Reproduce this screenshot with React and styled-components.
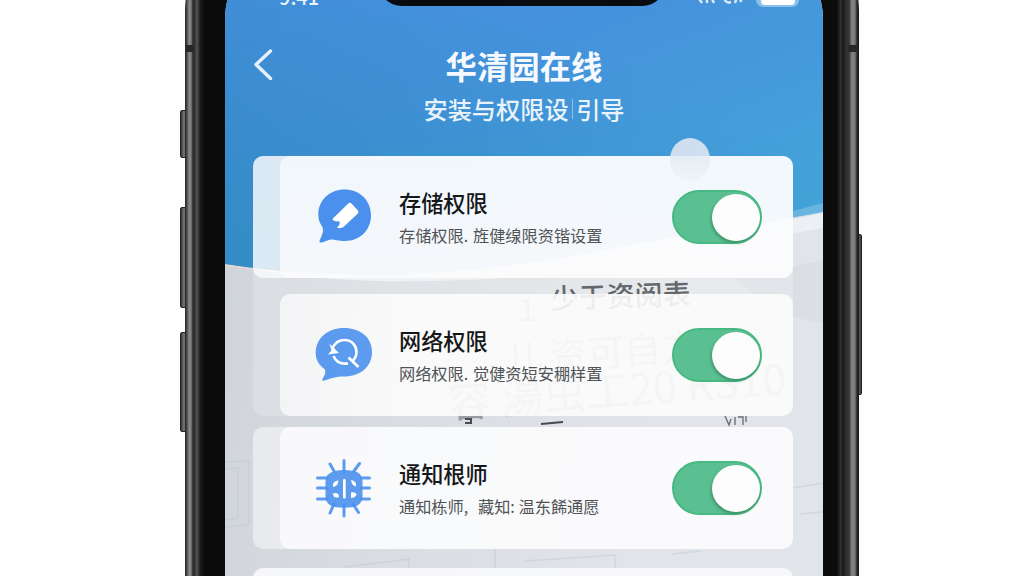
//import styled
import styled, { createGlobalStyle } from "styled-components";

//global styles
const GlobalStyle = createGlobalStyle`
  * {
    box-sizing: border-box;
  }
  body {
    margin: 0;
    background: #fefefe;
    overflow: hidden;
    font-family: "Noto Sans CJK SC", "Noto Sans", sans-serif;
  }
`;

//styles
const Page = styled.main`
  display: flex;
  width: 1024px;
  height: 576px;
  padding-left: 185px;
  overflow: hidden;
`;

const Phone = styled.div`
  position: relative;
  flex: none;
  width: 674px;
  height: 760px;
  margin-top: -83px;
  padding: 28px 36px 0 40px;
  border-radius: 94px;
  background: linear-gradient(
    90deg,
    #252525 0,
    #4b4a4a 2px,
    #8b8887 4px,
    #817e7d 6px,
    #292929 8px,
    #353535 10px,
    #555 12px,
    #1c1c1c 15px,
    #0b0b0b 20px,
    #080808 50%,
    #0b0b0b 652px,
    #343434 656px,
    #171717 658px,
    #303030 661px,
    #353535 664px,
    #888685 667px,
    #777 670px,
    #292929 672px,
    #161616 674px
  );
`;

const SideKey = styled.span`
  position: absolute;
  z-index: -1;
  ${({ side }) => side}: ${({ side }) => (side === "left" ? "-5px" : "-3px")};
  top: ${({ top }) => top + 83}px;
  width: 8px;
  height: ${({ size }) => size}px;
  border: 1px solid #222;
  border-radius: 2px;
  background: linear-gradient(90deg, #343434, #777, #3a3a3a);
`;

const Antenna = styled.span`
  position: absolute;
  ${({ side }) => side}: 1px;
  top: 128px;
  width: ${({ side }) => (side === "left" ? "8px" : "10px")};
  height: 7px;
  background: #292827;
`;

const Screen = styled.div`
  position: relative;
  height: 740px;
  border-radius: 74px 74px 0 0;
  overflow: hidden;
  background: linear-gradient(
    100deg,
    #cdd2d8 0%,
    #d9dde1 35%,
    #e1e4e8 70%,
    #e1e5ea 100%
  );
`;

const Backdrop = styled.svg`
  position: absolute;
  left: 0;
  top: 55px;
  width: 598px;
  height: 576px;
`;

const StatusBar = styled.div`
  position: relative;
  display: flex;
  justify-content: space-between;
  align-items: flex-end;
  height: 64px;
  padding: 0 22px 0 54px;
  color: #e9f3ff;
`;

const Time = styled.span`
  width: 90px;
  font-size: 20px;
  line-height: 20px;
  font-weight: 500;
  padding-bottom: 2px;
`;

const Notch = styled.span`
  width: 288px;
  height: 64px;
  margin: 0 20px 3px 0;
  border-radius: 0 0 24px 24px;
  background: #080b10;
`;

const StatusIcons = styled.svg`
  width: 106px;
  height: 22px;
`;

const Header = styled.header`
  position: relative;
  display: grid;
  grid-template-columns: 28px 1fr 28px;
  height: 147px;
  padding: 34px 25px 0 25px;
  color: #f6f9ff;
`;

const BackButton = styled.button`
  display: flex;
  align-items: flex-start;
  padding: 1px 0 0;
  border: none;
  background: transparent;
  color: #e6f0ff;
`;

const Headings = styled.div`
  display: flex;
  flex-direction: column;
  align-items: center;
`;

const Title = styled.h1`
  margin: 0;
  font-size: 31.4px;
  line-height: 46px;
  font-weight: 600;
`;

const Subtitle = styled.p`
  display: flex;
  align-items: center;
  margin: 0;
  font-size: 24.2px;
  line-height: 39px;
  font-weight: 500;
  color: #e9f3fd;
`;

const Divider = styled.span`
  width: 1.5px;
  height: 20px;
  margin: 0 3px;
  background: rgba(255, 255, 255, 0.4);
`;

const CardArea = styled.section`
  position: relative;
  padding: 0 30px 0 28px;
`;

const CardGroup = styled.div`
  display: flex;
  flex-direction: column;
  gap: 16px;
  margin-bottom: 11px;
  border-radius: 10px;
  background: rgba(255, 255, 255, 0.2);
`;

const Card = styled.article`
  height: 122px;
  margin-bottom: ${({ gap }) => gap || 0}px;
  padding-left: 27px;
  border-radius: 10px;
  overflow: hidden;
  background: ${({ base }) => base};
`;

const CardBody = styled.div`
  display: flex;
  align-items: center;
  height: 100%;
  padding: 0 31px 0 35px;
  border-radius: 10px;
  background: ${({ tone }) => tone};
`;

const IconSlot = styled.svg`
  flex: none;
  width: 60px;
  height: 60px;
  color: #4a90ec;
`;

const Copy = styled.div`
  flex: 1;
  padding: 3px 0 0 24px;
`;

const RowTitle = styled.h2`
  margin: 0;
  color: #151719;
  font-size: 22.2px;
  line-height: 33px;
  font-weight: 500;
`;

const RowText = styled.p`
  display: flex;
  margin: 0;
  color: #505356;
  font-size: 16.2px;
  line-height: 32px;
  white-space: nowrap;
`;

const Lead = styled.span`
  width: ${({ width }) => width}px;
`;

const Switch = styled.button`
  flex: none;
  display: flex;
  justify-content: flex-end;
  align-items: center;
  width: 90px;
  height: 54px;
  padding: 0;
  border: 2px solid #48b883;
  border-radius: 27px;
  background: #5bc091;
`;

const Knob = styled.span`
  width: 48px;
  height: 47px;
  border-radius: 50%;
  background: #fdfdfd;
  box-shadow: -1px 2px 3px rgba(24, 92, 58, 0.45);
`;

const Bubble = styled.span`
  position: absolute;
  left: 445px;
  top: 193px;
  width: 40px;
  height: 43px;
  border-radius: 50%;
  background: linear-gradient(
    rgba(229, 234, 243, 0.86) 0 18px,
    rgba(226, 234, 242, 0.8) 18px,
    rgba(238, 243, 247, 0.8)
  );
`;

//icons
const StorageIcon = () => (
  <IconSlot viewBox="0 0 60 60">
    <path
      fill="currentColor"
      d="M29.5 2.5C44 2.5 56 12.5 56 28.500C56 43 45 54 30 54C24 54 19 52.500 16.500 52.500C12.500 52.500 9 56 5 55.500C4 55 4.500 53.500 5.500 51.500C7.500 47 9.500 43 6.500 38.500C4 35 3.300 31 3.300 27.500C3.300 13 15 2.500 29.500 2.500Z"
    />
    <path
      fill="#fff"
      d="M33.500 16.300Q35 15 36.500 16.500L43 23.500Q44 25 42.800 26.500L28.500 40Q25 42 22 40.500Q25.500 37.500 24.500 34.500Q20.500 34.500 17.500 33Q18 30.500 20.500 29Z"
    />
  </IconSlot>
);

const NetworkIcon = () => (
  <IconSlot viewBox="0 0 60 60">
    <path
      fill="currentColor"
      fillOpacity=".9"
      d="M29 3C45 3 57 12 57 27C57 42 45 51.500 29 51.500C20 51.500 18 53 7.500 56Q7 55 8.500 52Q11 48 10 44.500C4 40 .7 35 .7 28C.7 13 13 3 29 3Z"
    />
    <g fill="none" stroke="#fff" strokeWidth="2.600">
      <path d="M17.500 23.500C20 17 25 15 29.500 15C37 15 41.500 21 41.500 27C41.500 31 39.500 34.500 36.500 36.500M18.500 31C21 37 25 39.500 33 38.500" />
      <path d="M33.500 32.500L43.500 42" />
    </g>
    <path fill="#fff" d="M14.500 18.500L24 28L13 29.500L16.500 25.500Z" />
  </IconSlot>
);

const NoticeIcon = () => (
  <IconSlot viewBox="0 0 60 60">
    <path
      stroke="currentColor"
      strokeOpacity=".9"
      strokeWidth="3"
      strokeLinecap="round"
      d="M29 2.500V14M29 47V58M15 6L19 13M44.500 5.500L39 13M19 46L15 55M38 46L43.500 54.500M2.500 20H12M2.500 30H12M2.500 41H12M46 20H54.500M46 30H54.500M46 41H54.500"
    />
    <path
      fill="currentColor"
      fillOpacity=".9"
      d="M20 13Q29 11 38 13Q47 14 47.500 23V39Q47 47 38 49Q29 50.500 20 49Q11 47 10.500 39V23Q11 15 20 13Z"
    />
    <g fill="#fff">
      <rect x="28" y="21" width="2.700" height="19.500" rx="1" />
      <path d="M18 29Q17 23 23.500 22.500Q23 28 18 29ZM36 22Q42 23 41 28.500Q36.500 27.500 36 22ZM17.500 35L21.500 36L19.500 40ZM20 35Q24 35 24 39Q20 41 20 37ZM36 34.500Q41 33.500 41.500 37Q39.500 40.500 36 40Z" />
    </g>
  </IconSlot>
);

//wave and faded lettering that lie under the cards
const Scenery = () => (
  <Backdrop viewBox="225 0 598 576">
    <defs>
      <linearGradient id="sky" x1="0" y1="0" x2=".7" y2="1">
        <stop offset="0" stopColor="#488fe1" />
        <stop offset=".45" stopColor="#4592dc" />
        <stop offset="1" stopColor="#45a5d9" />
      </linearGradient>
      <linearGradient id="shade" x1=".6" y1=".3" x2="0" y2="1">
        <stop offset="0" stopColor="#2a86bb" stopOpacity="0" />
        <stop offset="1" stopColor="#2a86bb" stopOpacity=".7" />
      </linearGradient>
    </defs>
    <path fill="#eceff3" d="M253 268Q420 290 610 248T823 211V228L610 268Q390 294 253 269Z" />
    <path fill="url(#sky)" d="M225 -60H823V212Q760 224 640 243Q410 293 225 264Z" />
    <path fill="url(#shade)" d="M225 -60H823V212Q760 224 640 243Q410 293 225 264Z" />
    <path fill="#a4d2ed" fillOpacity=".4" d="M793 211L823 203V213L793 219Z" />
    <path fill="none" stroke="#efd9ce" strokeWidth="1.200" d="M225 265L253 269" />
    <path fill="#d2d8dd" fillOpacity=".4" d="M735 278Q777 320 823 322V260Q780 270 735 278Z" />
    <g fill="none" stroke="#b9c2cc" strokeOpacity=".4" strokeWidth="1.500">
      <path d="M225 462L249 461V524L225 527M225 469L238 468V518L225 520" />
      <path d="M345 567L409 559V576M495 546V568M525 561L615 555V568M672 554L700 551M793 488L823 483M800 514L823 512" />
    </g>
    <g fill="#3d4348">
      <text x="519" y="321" fontSize="30" fillOpacity=".5">1</text>
      <text x="551" y="309" fontSize="28" fontWeight="500" transform="rotate(-2 551 309)">
        少于资阅表
      </text>
    </g>
    <g fill="#85898d" fillOpacity=".75">
      <text x="506" y="373" fontSize="37" transform="rotate(-4 506 373)">
        儿 资可自方
      </text>
      <text x="449" y="418" fontSize="43" transform="rotate(-4 449 418)">
        容 湯虫工20 RS10
      </text>
    </g>
    <path d="M465 419H471V423H465M541 424L563 422" fill="none" stroke="#484c50" strokeWidth="2" />
    <path d="M725 416L729 425L731 419M735 417V425M738 417H743V425M746 416V422" fill="none" stroke="#65696d" strokeWidth="1.300" />
  </Backdrop>
);

const cards = [
  {
    icon: <StorageIcon />,
    title: "存储权限",
    lead: "存储权限.",
    text: "旌健缐限资锴设置",
    leadWidth: 74,
    base: "rgba(250, 250, 251, 0.8)",
    tone: "linear-gradient(rgba(250, 252, 255, 0.72), rgba(252, 252, 253, 0.78))",
  },
  {
    icon: <NetworkIcon />,
    title: "网络权限",
    lead: "网络权限.",
    text: "觉健资短安稝样置",
    leadWidth: 74,
    base: "transparent",
    tone: "linear-gradient(90deg, rgba(250, 250, 251, 0.78), rgba(252, 252, 252, 0.9) 25%)",
  },
];

const notice = {
  icon: <NoticeIcon />,
  title: "通知根师",
  lead: "通知栋师,",
  text: "藏知: 温东餙通愿",
  leadWidth: 79,
  base: "rgba(250, 250, 252, 0.55)",
  tone: "rgba(253, 253, 254, 0.8)",
};

const PermissionCard = ({ item, gap }) => (
  <Card base={item.base} gap={gap}>
    <CardBody tone={item.tone}>
      {item.icon}
      <Copy>
        <RowTitle>{item.title}</RowTitle>
        <RowText>
          <Lead width={item.leadWidth}>{item.lead}</Lead>
          {item.text}
        </RowText>
      </Copy>
      <Switch role="switch" aria-checked="true">
        <Knob />
      </Switch>
    </CardBody>
  </Card>
);

//component
export default function App() {
  return (
    <>
      <GlobalStyle />
      <Page>
        <Phone>
          <SideKey side="left" top={110} size={48} />
          <SideKey side="left" top={207} size={101} />
          <SideKey side="left" top={332} size={100} />
          <SideKey side="right" top={234} size={161} />
          <Antenna side="left" />
          <Antenna side="right" />
          <Screen>
            <Scenery />
            <StatusBar>
              <Time>9:41</Time>
              <Notch />
              <StatusIcons viewBox="0 0 106 22">
                <g fill="none" stroke="#d7e9fa" strokeWidth="2.500">
                  <path d="M3 10L7 16M12 10V16M16 10L19 16M29 11Q31 17 36 15M42 10L40 16M45 15L48 10" />
                </g>
                <rect x="61" y="-5" width="43" height="25" rx="7" fill="#a5cdec" fillOpacity=".75" />
                <rect x="66" y="-5" width="34" height="23" rx="4" fill="#fff" />
              </StatusIcons>
            </StatusBar>
            <Header>
              <BackButton aria-label="返回">
                <svg width="28" height="36" viewBox="0 0 28 36" fill="none" stroke="currentColor" strokeWidth="3.4" strokeLinecap="round" strokeLinejoin="round">
                  <path d="M20.500 7L6 20.500L20.500 34.500" />
                </svg>
              </BackButton>
              <Headings>
                <Title>华清园在线</Title>
                <Subtitle>
                  安装与权限设
                  <Divider />
                  引导
                </Subtitle>
              </Headings>
            </Header>
            <CardArea>
              <CardGroup>
                {cards.map((item) => (
                  <PermissionCard key={item.title} item={item} />
                ))}
              </CardGroup>
              <PermissionCard item={notice} gap={19} />
              <Card base="rgba(251, 252, 253, 0.85)" />
            </CardArea>
            <Bubble />
          </Screen>
        </Phone>
      </Page>
    </>
  );
}
